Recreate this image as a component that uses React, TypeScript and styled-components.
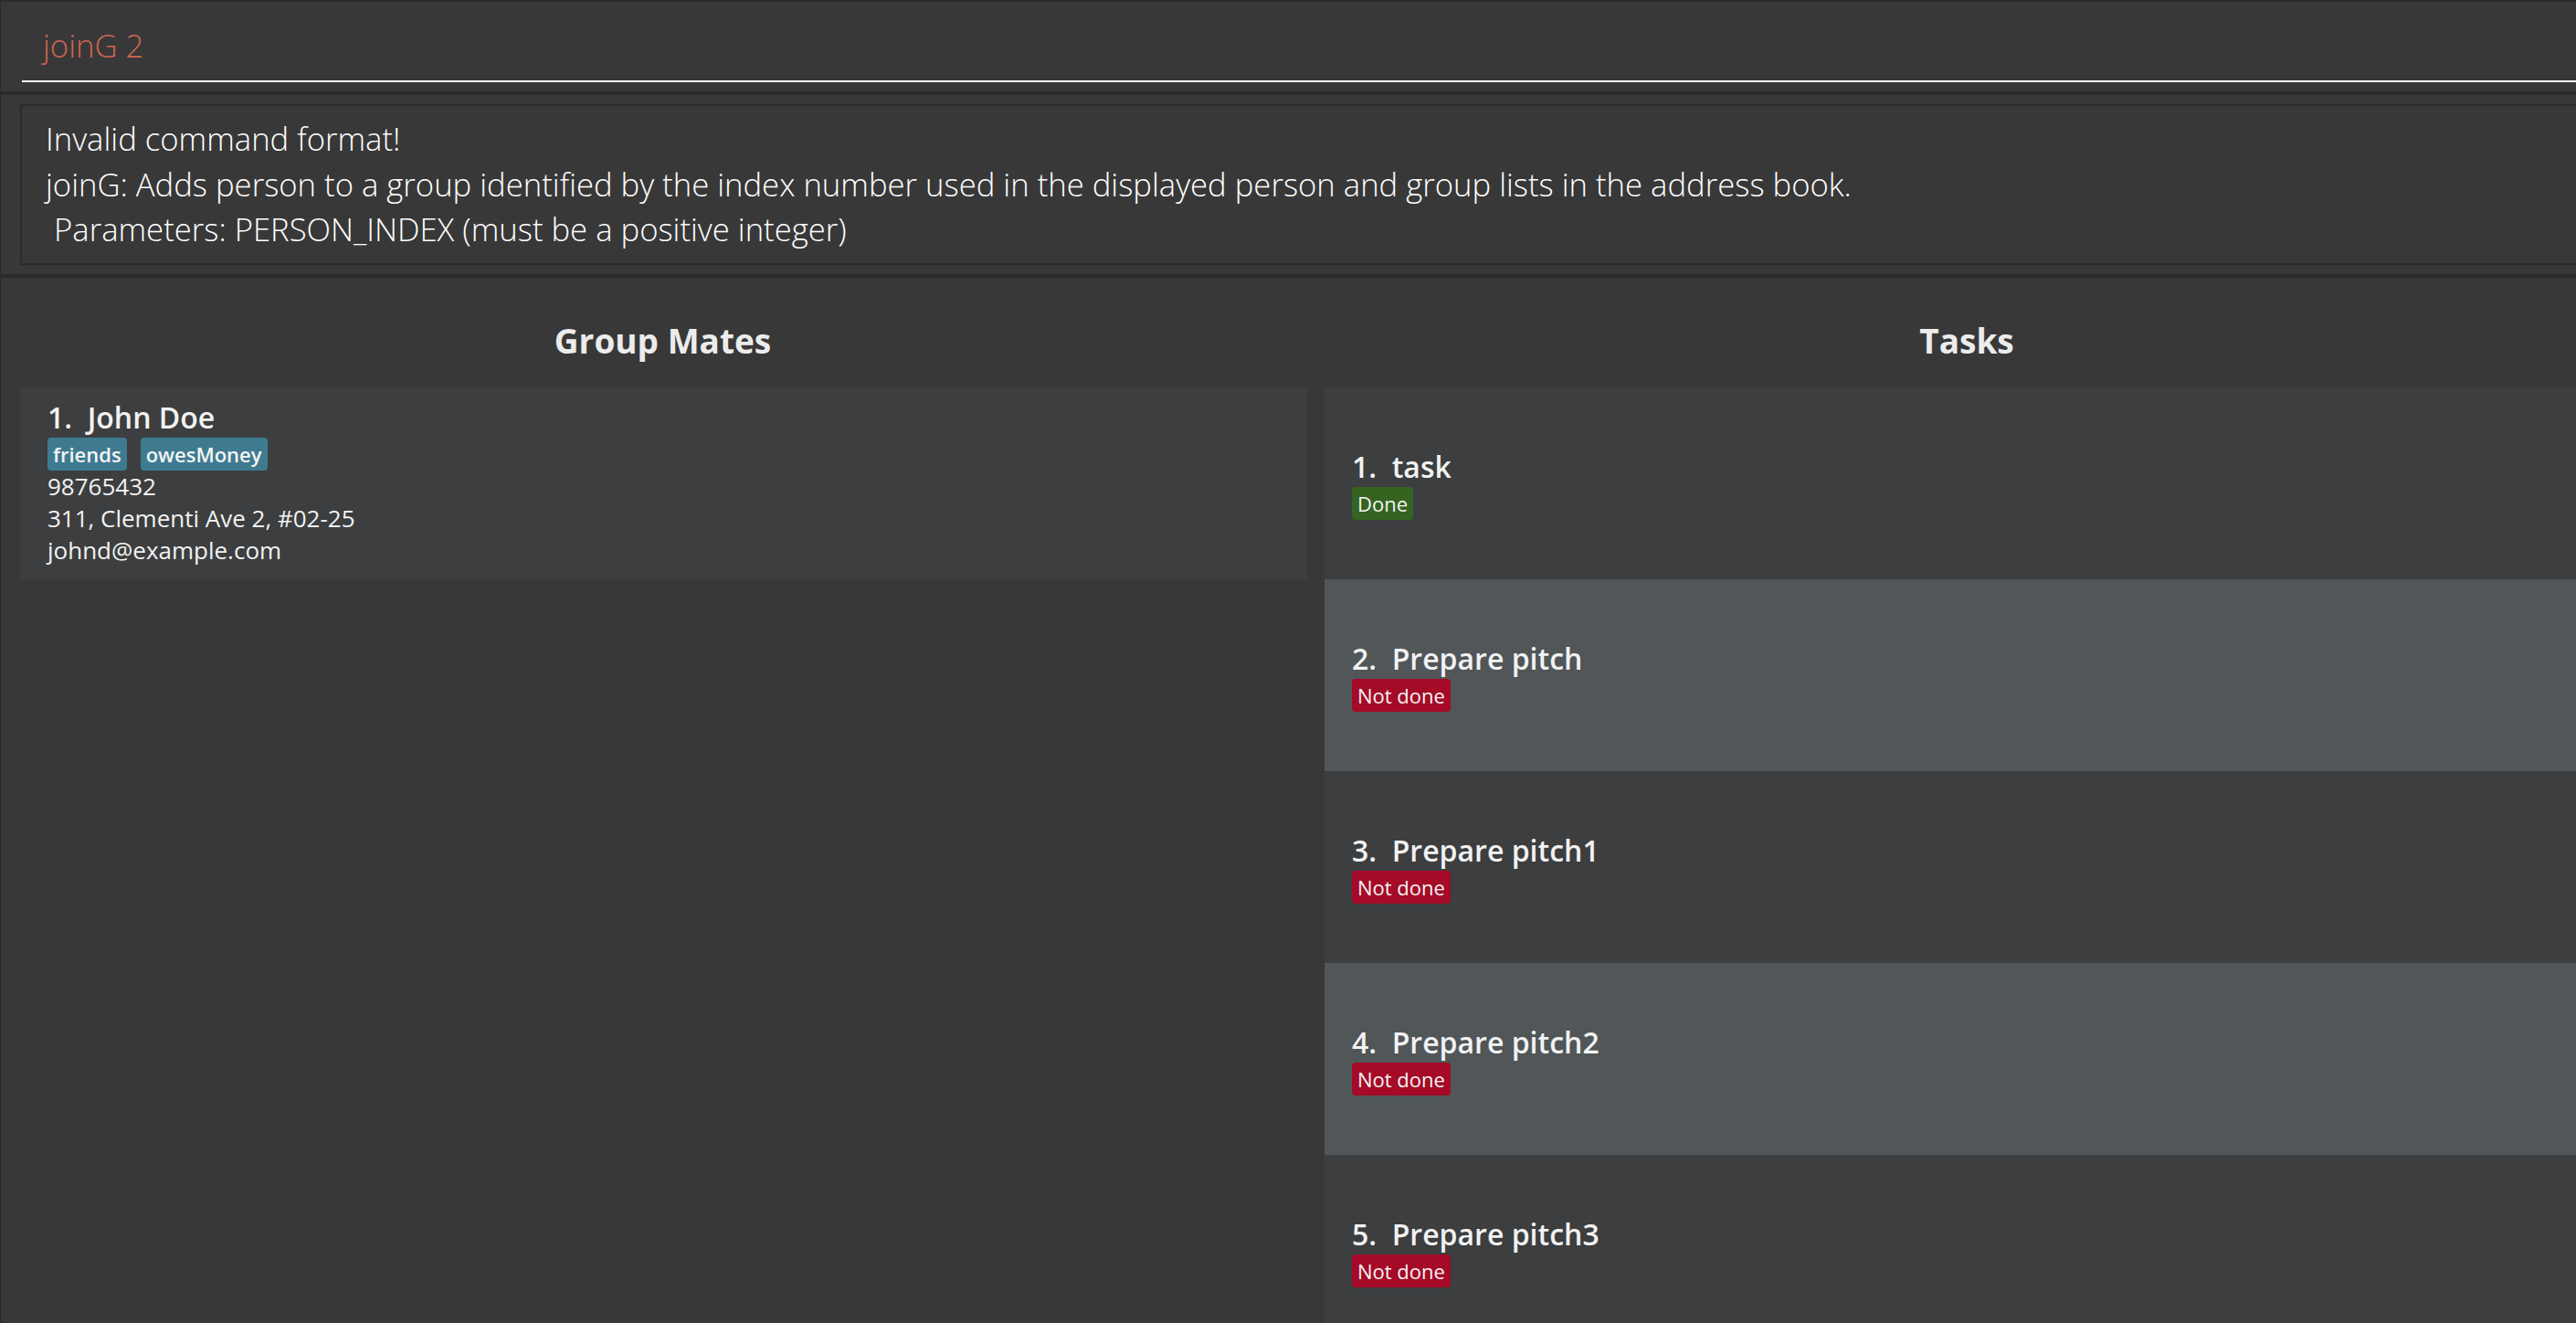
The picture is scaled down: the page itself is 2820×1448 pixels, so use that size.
import React from "react";
import styled, { createGlobalStyle } from "styled-components";

type Person = {
  name: string;
  tags: string[];
  phone: string;
  address: string;
  email: string;
};

type Task = {
  name: string;
  done: boolean;
};

const persons: Person[] = [
  {
    name: "John Doe",
    tags: ["friends", "owesMoney"],
    phone: "98765432",
    address: "311, Clementi Ave 2, #02-25",
    email: "johnd@example.com",
  },
];

const tasks: Task[] = [
  { name: "task", done: true },
  { name: "Prepare pitch", done: false },
  { name: "Prepare pitch1", done: false },
  { name: "Prepare pitch2", done: false },
  { name: "Prepare pitch3", done: false },
];

const GlobalStyle = createGlobalStyle`
  html, body {
    margin: 0;
    padding: 0;
    background: #383838;
    overflow: hidden;
  }
  body {
    font-family: "Open Sans", "Noto Sans", sans-serif;
    color: #ffffff;
  }
`;

const Window = styled.div`
  width: 2856px;
  height: 1448px;
  background: #383838;
  border-top: 2px solid #2a2a2a;
  border-left: 1px solid #2a2a2a;
  box-sizing: border-box;
  display: flex;
  flex-direction: column;
  overflow: hidden;
`;

const CommandBar = styled.div`
  flex-shrink: 0;
  padding: 24px 0 10px 23px;
`;

const CommandInput = styled.div`
  padding: 0 0 14px 23px;
  line-height: 48px;
  font-size: 34.67px;
  font-weight: 300;
  color: #d06651;
  border-bottom: 2px solid #ffffff;
`;

const ResultArea = styled.div`
  flex-shrink: 0;
  border-top: 4px solid #2a2a2a;
  padding: 10px 0 10px 21px;
`;

const ResultBox = styled.div`
  border: 2px solid #2b2b2b;
  border-right: none;
  padding: 11px 0 12px 26px;
  font-size: 34.67px;
  font-weight: 300;
  line-height: 49.5px;
  white-space: pre-wrap;
  color: #ffffff;
`;

const Lists = styled.div`
  flex: 1;
  border-top: 4px solid #2a2a2a;
  display: grid;
  grid-template-columns: 1449px 1406px;
  min-height: 0;
  overflow: hidden;
`;

const Panel = styled.div`
  display: flex;
  flex-direction: column;
  min-height: 0;
  overflow: hidden;
`;

const PanelTitle = styled.div`
  flex-shrink: 0;
  height: 120px;
  box-sizing: border-box;
  padding-top: 44px;
  line-height: 49px;
  font-size: 37px;
  font-weight: 700;
  text-align: center;
  color: #ececec;
`;

const List = styled.div<{ $padLeft: number; $padRight: number }>`
  flex-shrink: 0;
  padding: 0 ${(p) => p.$padRight}px 0 ${(p) => p.$padLeft}px;
  display: flex;
  flex-direction: column;
`;

const Card = styled.div<{ $odd?: boolean; $center?: boolean }>`
  flex-shrink: 0;
  height: 210px;
  box-sizing: border-box;
  padding: ${(p) => (p.$center ? "0" : "11px")} 30px 0 30px;
  background: ${(p) => (p.$odd ? "#515658" : "#3c3e3f")};
  display: flex;
  flex-direction: column;
  justify-content: ${(p) => (p.$center ? "center" : "flex-start")};
`;

const CardTitle = styled.div`
  font-size: 32px;
  font-weight: 600;
  line-height: 44px;
  white-space: pre;
  color: #f2f2f2;
`;

const TagRow = styled.div`
  display: flex;
  gap: 15px;
`;

const Tag = styled.span`
  height: 36px;
  line-height: 36px;
  padding: 0 6px;
  border-radius: 4px;
  background: #3e7b91;
  font-size: 22px;
  font-weight: 600;
  color: #f4f4f4;
`;

const Status = styled.span<{ $done: boolean }>`
  align-self: flex-start;
  height: 36px;
  line-height: 36px;
  padding: 0 6px;
  border-radius: 4px;
  background: ${(p) => (p.$done ? "#356421" : "#a50a27")};
  font-size: 22px;
  font-weight: 400;
  color: #f4f4f4;
`;

const Detail = styled.div`
  font-size: 26px;
  line-height: 35px;
  color: #f2f2f2;
`;

const App: React.FC = () => {
  return (
    <>
      <GlobalStyle />
      <Window>
        <CommandBar>
          <CommandInput>joinG 2</CommandInput>
        </CommandBar>
        <ResultArea>
          <ResultBox>
            {"Invalid command format!\njoinG: Adds person to a group identified by the index number used in the displayed person and group lists in the address book.\n Parameters: PERSON_INDEX (must be a positive integer)"}
          </ResultBox>
        </ResultArea>
        <Lists>
          <Panel>
            <PanelTitle>Group Mates</PanelTitle>
            <List $padLeft={21} $padRight={19}>
              {persons.map((p, i) => (
                <Card key={p.name} $odd={i % 2 === 1}>
                  <CardTitle>{`${i + 1}.  ${p.name}`}</CardTitle>
                  <TagRow>
                    {p.tags.map((t) => (
                      <Tag key={t}>{t}</Tag>
                    ))}
                  </TagRow>
                  <Detail>{p.phone}</Detail>
                  <Detail>{p.address}</Detail>
                  <Detail>{p.email}</Detail>
                </Card>
              ))}
            </List>
          </Panel>
          <Panel>
            <PanelTitle>Tasks</PanelTitle>
            <List $padLeft={0} $padRight={0}>
              {tasks.map((t, i) => (
                <Card key={t.name} $odd={i % 2 === 1} $center>
                  <CardTitle>{`${i + 1}.  ${t.name}`}</CardTitle>
                  <Status $done={t.done}>{t.done ? "Done" : "Not done"}</Status>
                </Card>
              ))}
            </List>
          </Panel>
        </Lists>
      </Window>
    </>
  );
};

export default App;
